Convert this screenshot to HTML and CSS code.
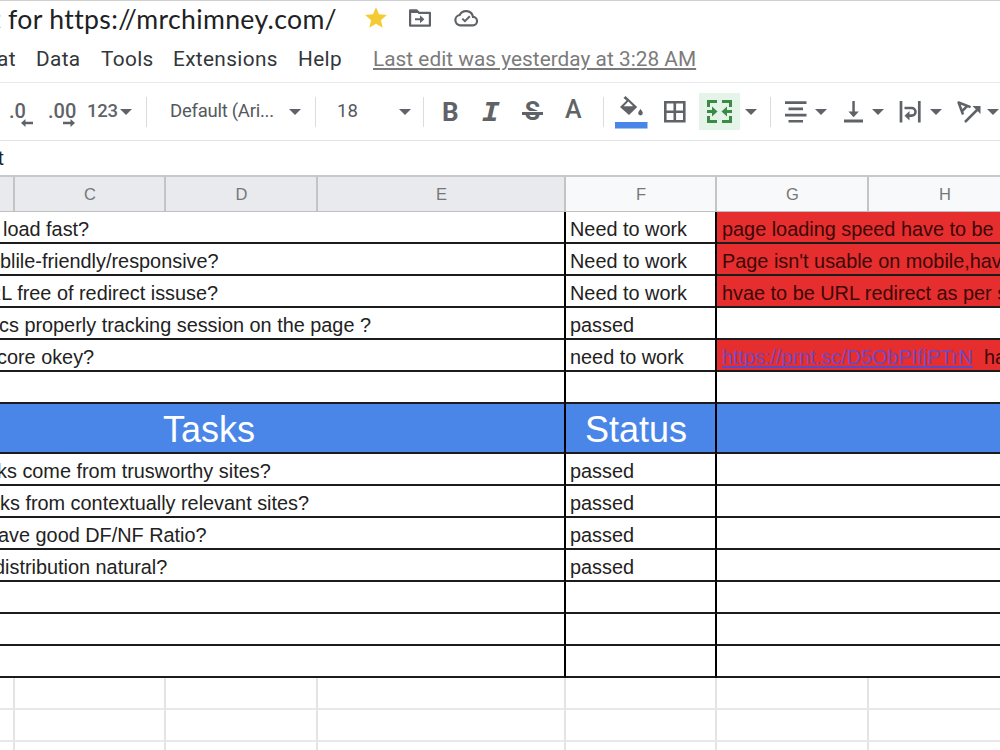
FILE: index.html
```html
<!DOCTYPE html>
<html>
<head>
<meta charset="UTF-8">
<title>Audit for https://mrchimney.com/</title>
<link rel="stylesheet" href="styles.css">
</head>

<body>

<!-- title bar -->
<div class="titlebar">
	<span class="doc-title">t for https://mrchimney.com/</span>
	<svg class="star" width="26" height="26" viewBox="0 0 24 24"><path fill="#f4cb35" d="M12 17.27L18.18 21l-1.64-7.03L22 9.24l-7.19-.61L12 2 9.19 8.63 2 9.24l5.46 4.73L5.82 21z"/></svg>
	<svg class="folder" width="24" height="20" viewBox="0 0 24 20"><path fill="none" stroke="#5f6368" stroke-width="2.2" stroke-linejoin="round" d="M2.1 2.4h6.6l2.2 2.4h11v12.9H2.1z"/><path fill="#5f6368" d="M1.500 2h7.400l2.600 3h-10zM7 10.200h5V7.200l4.400 4-4.400 4v-3H7z"/></svg>
	<svg class="cloud" width="26" height="20" viewBox="0 0 26 20"><path fill="none" stroke="#5f6368" stroke-width="2.2" d="M7 17.3h12.7a4.2 4.2 0 0 0 .3-8.4A7.1 7.1 0 0 0 6.7 7 5.2 5.2 0 0 0 7 17.3z"/><path fill="none" stroke="#5f6368" stroke-width="2" d="M9.3 10.6l2.6 2.6 4.9-4.9"/></svg>
</div>

<!-- menu -->
<div class="menu">
	<span class="m-format">at</span>
	<span class="m-data">Data</span>
	<span class="m-tools">Tools</span>
	<span class="m-ext">Extensions</span>
	<span class="m-help">Help</span>
	<a class="last-edit">Last edit was yesterday at 3:28 AM</a>
</div>

<div class="toolbar">
	<span class="dec">.0<svg width="12" height="8" viewBox="0 0 12 8"><path d="M0 4l4.500-4v2.800H12v2.400H4.500V8z"/></svg></span>
	<span class="dec">.00<svg width="12" height="8" viewBox="0 0 12 8"><path d="M12 4L7.500 0v2.800H0v2.400h7.500V8z"/></svg></span>
	<span class="num">123</span>
	<i class="caret"></i>
	<i class="sep"></i>
	<span class="font-name">Default (Ari...</span>
	<i class="caret"></i>
	<i class="sep"></i>
	<span class="font-size">18</span>
	<i class="caret"></i>
	<i class="sep"></i>
	<b class="bold">B</b>
	<b class="italic">I</b>
	<b class="strike">S</b>
	<span class="color">A</span>
	<i class="sep"></i>
	<svg width="34" height="34" viewBox="0 0 34 34"><path d="M8.500 3l2-2 11.700 10.900-8.200 8.200L5 11.900l6.600-6.300z"/><path fill="#fff" d="M8.700 11.200l4.700-4.600 4.700 4.600z"/><path d="M25.500 14s2.300 2.700 2.300 4.100a2.300 2.300 0 0 1-4.600 0c0-1.400 2.300-4.100 2.300-4.100z"/><path fill="#4a86e8" d="M0 27h32.500v6.500H0z"/></svg>
	<svg width="22" height="22" viewBox="0 0 22 22"><path fill="none" stroke="#5f6368" stroke-width="2.600" d="M1.300 1.300h19v19h-19zM10.800 1v20M1 10.800h20"/></svg>
	<span class="merge"><svg width="25" height="23" viewBox="0 0 25 23"><path fill="none" stroke="#3c8b45" stroke-width="3" d="M1.500 7V1.500H10M15 1.500h8.500V7M1.500 16v5.500H10M15 21.500h8.500V16"/><path fill="#3c8b45" d="M0 10h5V6.500l5.500 5L5 16.500V13H0zM25 10h-5V6.500l-5.500 5 5.500 5V13h5z"/></svg></span>
	<i class="caret"></i>
	<i class="sep"></i>
	<svg width="22" height="22" viewBox="0 0 22 22"><path fill="none" stroke="#5f6368" stroke-width="2.600" d="M0 1.600h21.500M3.500 7.900H18M0 14.100h21.500M3.500 20.300H18"/></svg>
	<i class="caret"></i>
	<svg width="20" height="22" viewBox="0 0 20 22"><path d="M8.300 0h2.500v10.500h4l-5.200 5.700-5.200-5.700h3.900zM0 18.600h19v2.800H0z"/></svg>
	<i class="caret"></i>
	<svg width="23" height="22" viewBox="0 0 23 22"><path fill="none" stroke="#5f6368" stroke-width="2.700" d="M2 0v21.500M20.300 0v21.500"/><path fill="none" stroke="#5f6368" stroke-width="2.600" d="M5.500 7h7.200a3.800 3.800 0 0 1 0 7.600H10"/><path d="M5.500 14.800l5-4.800v9.600z"/></svg>
	<i class="caret"></i>
	<svg width="25" height="24" viewBox="0 0 25 24"><path fill="none" stroke="#5f6368" stroke-width="2.500" stroke-linejoin="round" d="M6 14.500L1.600 2.500l12 4.600M5.200 11l5.200-5.200M8 22L21 9"/><path d="M15.500 6h8v8z"/></svg>
	<i class="caret"></i>
</div>

<div class="formula">t</div>

<!-- column letters -->
<div class="cols heads">
	<div class="sel"></div>
	<div class="sel">C</div>
	<div class="sel">D</div>
	<div class="sel">E</div>
	<div>F</div>
	<div>G</div>
	<div>H</div>
</div>

<div class="sheet">
	<div class="row"><div class="task"><span class="t1">load fast?</span></div><div class="status">Need to work</div><div class="note red">page loading speed have to be</div></div>
	<div class="row"><div class="task"><span class="t2">blile-friendly/responsive?</span></div><div class="status">Need to work</div><div class="note red">Page isn't usable on mobile,have</div></div>
	<div class="row"><div class="task"><span class="t3">RL free of redirect issuse?</span></div><div class="status">Need to work</div><div class="note red">hvae to be URL redirect as per s</div></div>
	<div class="row"><div class="task"><span class="t4">cs properly tracking session on the page ?</span></div><div class="status">passed</div><div class="note"></div></div>
	<div class="row"><div class="task"><span class="t5">core okey?</span></div><div class="status">need to work</div><div class="note red"><a>https://prnt.sc/D5ObPIfjPTrN</a>&nbsp; have</div></div>
	<div class="row"><div class="task"></div><div class="status"></div><div class="note"></div></div>
	<div class="row band"><div class="task">Tasks</div><div class="status">Status</div><div class="note"></div></div>
	<div class="row"><div class="task"><span class="t6">ks come from trusworthy sites?</span></div><div class="status">passed</div><div class="note"></div></div>
	<div class="row"><div class="task"><span class="t7">ks from contextually relevant sites?</span></div><div class="status">passed</div><div class="note"></div></div>
	<div class="row"><div class="task"><span class="t8">ave good DF/NF Ratio?</span></div><div class="status">passed</div><div class="note"></div></div>
	<div class="row"><div class="task"><span class="t9">distribution natural?</span></div><div class="status">passed</div><div class="note"></div></div>
	<div class="row"><div class="task"></div><div class="status"></div><div class="note"></div></div>
	<div class="row"><div class="task"></div><div class="status"></div><div class="note"></div></div>
	<div class="row"><div class="task"></div><div class="status"></div><div class="note"></div></div>
	<div class="cols blank"><div></div><div></div><div></div><div></div><div></div><div></div><div></div></div>
	<div class="cols blank"><div></div><div></div><div></div><div></div><div></div><div></div><div></div></div>
	<div class="cols blank"><div></div><div></div><div></div><div></div><div></div><div></div><div></div></div>
</div>

</body>
</html>
```
FILE: styles.css
```css
* {
  box-sizing: border-box;
}
body {
  margin: 0;
  width: 1000px;
  height: 750px;
  overflow: hidden;
  background-color: #fff;
  font-family: Roboto, Arial, sans-serif;
}
span, a, b, div {
  white-space: nowrap;
}

/* title */
.titlebar {
  display: flex;
  height: 38px;
  border-top: 1px solid #d0d0d0;
  overflow: hidden;
}
.doc-title {
  width: 363px;
  flex: none;
  font-family: Lato, "Open Sans", sans-serif;
  font-size: 26.6px;
  letter-spacing: 0.35px;
  line-height: 36px;
  color: #202124;
  text-indent: -9px;
}
.star { margin-top: 4px; }
.folder { margin: 7px 0 0 19px; }
.cloud { margin: 7px 0 0 21px; }

/* menu */
.menu {
  display: flex;
  height: 45px;
  line-height: 43px;
  border-bottom: 1px solid #e8eaed;
  font-size: 20.8px;
  letter-spacing: 0.35px;
  color: #33363a;
}
.menu span, .menu a { flex: none; }
.m-format { width: 36px; text-indent: -3px; }
.m-data { width: 65px; }
.m-tools { width: 72px; }
.m-ext { width: 125px; }
.m-help { width: 75px; }
.last-edit {
  color: #7b7b7b;
  letter-spacing: 0.03px;
  text-decoration: underline;
}

/* toolbar */
.toolbar {
  display: grid;
  grid-template-columns: 39px 39px 33px 25px 25px 119px 25px 22px 63px 23px 20px 39px 40px 44px 37px 12px 49px 35px 47px 24px 15px 31px 28px 29px 26px 32px 26px 31px 12px;
  align-items: center;
  height: 58px;
  padding-left: 10px;
  border-bottom: 1px solid #e2e3e5;
  color: #5f6368;
  fill: #5f6368;
  font-size: 19px;
}
.toolbar svg { display: block; }
.dec {
  position: relative;
  font-size: 20px;
  font-weight: 500;
  margin: -2px 0 0 -1px;
}
.dec svg {
  position: absolute;
  left: 12px;
  top: 20px;
}
.dec:nth-child(2) svg { left: 15px; }
.num {
  margin: -2px 0 0 -1px;
  letter-spacing: -0.3px;
  font-weight: 500;
  font-size: 18.5px;
}
.font-name {
  margin: -2px 0 0 -1px;
  letter-spacing: -0.25px;
  font-size: 18.5px;
  color: #55595e;
}
.font-size {
  margin-top: -2px;
  font-size: 18.5px;
  color: #55595e;
}
.caret {
  width: 12px;
  border: 6px solid transparent;
  border-top-color: #5f6368;
  border-bottom: 0;
  margin: 1px 0 0 -1px;
}
.sep {
  width: 1px;
  height: 30px;
  background-color: #dadce0;
}
.bold { font-size: 26px; margin-left: -1px; }
.italic {
  font-family: "DejaVu Sans Mono", monospace;
  font-style: oblique;
  font-size: 26px;
  transform: scaleX(1.15);
  transform-origin: left;
}
.strike {
  position: relative;
  width: 21px;
  font-size: 25px;
  text-align: center;
}
.strike::after {
  content: "";
  position: absolute;
  left: 0;
  top: 14px;
  width: 21px;
  height: 3px;
  background-color: #5f6368;
  border-top: 1px solid #fff;
}
.color {
  font-size: 25px;
  font-weight: 500;
  margin: -5px 0 0 -1px;
}
.merge {
  display: flex;
  align-items: center;
  justify-content: center;
  width: 41px;
  height: 37px;
  background-color: #e4f4e8;
}

.formula {
  height: 34px;
  line-height: 34px;
  font-family: "Liberation Sans", Arial, sans-serif;
  font-size: 20px;
  color: #222;
  text-indent: -2px;
}

/* grid */
.cols {
  display: grid;
  grid-template-columns: 15px 151px 152px 248px 151px 152px 153px;
}
.heads {
  height: 37px;
  border-top: 2px solid #c8c8c8;
  border-bottom: 1px solid #c0c0c0;
  font-family: "Liberation Sans", Arial, sans-serif;
  font-size: 16.5px;
  line-height: 35px;
  text-align: center;
  color: #777;
}
.heads div {
  height: 34px;
  background-color: #f8f9fa;
  border-right: 2px solid #c4c4c4;
  padding-left: 1px;
}
.heads .sel { background-color: #e8eaed; }

.sheet {
  font-family: "Liberation Sans", Arial, sans-serif;
  font-size: 19.87px;
  color: #222;
}
.row {
  display: grid;
  grid-template-columns: 566px 151px 283px;
  height: 32px;
  line-height: 34px;
}
.row div {
  border-right: 2px solid #000;
  border-bottom: 2px solid #1c1c1c;
  padding-left: 4px;
  overflow: hidden;
}
.row .task { padding-left: 0; }
.row .task span { display: block; }
.row .note {
  border-right: 0;
  padding-left: 5px;
}
.row .red {
  background-color: #e62e2e;
  color: #3d0808;
}
.red a {
  color: #7048c0;
  text-decoration: underline 1.5px #5a4cc8;
  text-decoration-skip-ink: none;
  text-underline-offset: 2px;
}
.t1 { margin-left: 3px; }
.t2 { margin-left: 0; }
.t3 { margin-left: -13px; }
.t4 { margin-left: -1px; }
.t5 { margin-left: -3px; }
.t6 { margin-left: -3px; }
.t7 { margin-left: 0; }
.t8 { margin-left: -2px; }
.t9 { margin-left: -6px; }

.row.band {
  height: 50px;
  line-height: 51px;
  font-size: 36px;
}
.row.band div {
  background-color: #4a86e8;
  color: #fff;
}
.row.band .task { padding-left: 163px; }
.row.band .status { padding-left: 19px; }

.blank { height: 32px; }
.blank div {
  border-right: 2px solid #e4e4e4;
  border-bottom: 2px solid #e8e8e8;
}
```
